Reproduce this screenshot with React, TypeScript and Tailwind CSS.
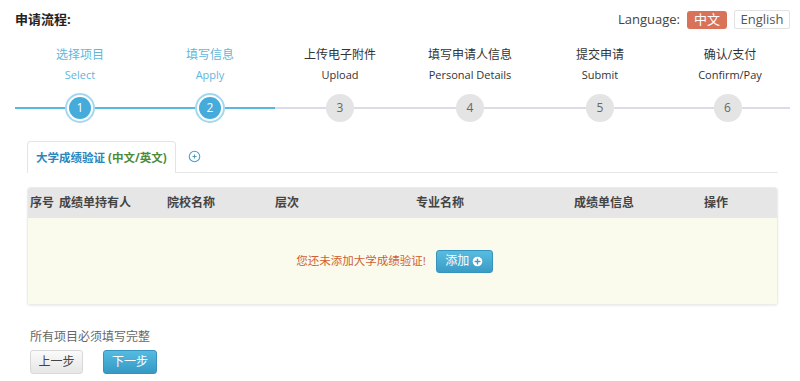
import React from 'react';

interface Step {
  cn: string;
  en: string;
  done: boolean;
}

const steps: Step[] = [
  { cn: '选择项目', en: 'Select', done: true },
  { cn: '填写信息', en: 'Apply', done: true },
  { cn: '上传电子附件', en: 'Upload', done: false },
  { cn: '填写申请人信息', en: 'Personal Details', done: false },
  { cn: '提交申请', en: 'Submit', done: false },
  { cn: '确认/支付', en: 'Confirm/Pay', done: false },
];

const columns = [
  { label: '序号', w: 'w-[29px]' },
  { label: '成绩单持有人', w: 'w-[108px]' },
  { label: '院校名称', w: 'w-[108px]' },
  { label: '层次', w: 'w-[141px]' },
  { label: '专业名称', w: 'w-[158px]' },
  { label: '成绩单信息', w: 'w-[130px]' },
  { label: '操作', w: 'flex-1' },
];

const PlusCircle: React.FC<{ className?: string }> = ({ className }) => (
  <svg viewBox="0 0 16 16" className={className}>
    <circle cx="8" cy="8" r="7" fill="white" />
    <path d="M8 4.5v7M4.5 8h7" stroke="#3a9fc9" strokeWidth="2" strokeLinecap="round" />
  </svg>
);

const App: React.FC = () => {
  const font = { fontFamily: '"Open Sans", "Noto Sans CJK SC", sans-serif' };
  return (
    <div className="w-[800px] h-[381px] bg-white overflow-hidden text-[#333]" style={font}>
      {/* header */}
      <div className="flex items-center justify-between pl-[15px] pr-[10px] pt-[10px] h-[29px]">
        <h1 className="text-[13px] font-bold text-[#222]">申请流程:</h1>
        <div className="flex items-center text-[13px]">
          <span className="text-[#444] mr-[7px]">Language:</span>
          <span className="h-[18px] w-[40px] rounded-[3px] bg-[#d8735a] text-white flex items-center justify-center">中文</span>
          <span className="ml-[7px] h-[19px] w-[56px] rounded-[2px] border border-[#e2e2e2] text-[#555] flex items-center justify-center">English</span>
        </div>
      </div>

      {/* steps */}
      <div className="grid grid-cols-[repeat(6,130px)] pl-[15px] mt-[18px]">
        {steps.map((s, i) => {
          const blue = 'bg-[#5ab8de]';
          const gray = 'bg-[#dcdbe8]';
          const leftBlue = i <= 1;
          const rightBlue = i <= 1;
          return (
            <div key={i} className="flex flex-col items-center">
              <div className={`text-[12px] leading-[16px] ${s.done ? 'text-[#62b6dc]' : 'text-[#333]'}`}>{s.cn}</div>
              <div className={`text-[11px] leading-[14px] mt-[5px] ${s.done ? 'text-[#62b6dc]' : 'text-[#333]'}`}>{s.en}</div>
              <div className="flex items-center w-full mt-[11px] h-[30px]">
                <div className={`h-[2px] flex-1 ${leftBlue ? blue : gray}`} />
                {s.done ? (
                  <div className="w-[30px] h-[30px] rounded-full bg-white border-2 border-[#a3d8ef] flex items-center justify-center">
                    <div className="w-[22px] h-[22px] rounded-full bg-[#44abdb] text-white text-[12px] flex items-center justify-center">{i + 1}</div>
                  </div>
                ) : (
                  <div className="w-[28px] h-[28px] rounded-full bg-[#e4e4e4] text-[#666] text-[12px] flex items-center justify-center">{i + 1}</div>
                )}
                <div className={`h-[2px] flex-1 ${rightBlue ? blue : gray} ${i === 5 ? 'mr-[5px]' : ''}`} />
              </div>
            </div>
          );
        })}
      </div>

      {/* tabs */}
      <div className="flex items-end ml-[27px] mr-[22px] mt-[17px] border-b border-[#e8e8e8]">
        <div className="h-[32px] px-[8px] border border-b-0 border-[#e4e4e4] rounded-t-[4px] bg-white flex items-center text-[11.5px] font-bold -mb-px">
          <span className="text-[#2a86bd]">大学成绩验证</span>
          <span className="text-[#4c8a3c] ml-[3px]">(中文/英文)</span>
        </div>
        <div className="h-[32px] flex items-center ml-[12px]">
          <svg viewBox="0 0 16 16" className="w-[13px] h-[13px]">
            <circle cx="8" cy="8" r="6.5" fill="none" stroke="#4a9ccd" strokeWidth="1.3" />
            <path d="M8 5.5v5M5.5 8h5" stroke="#4a9ccd" strokeWidth="1.4" />
          </svg>
        </div>
      </div>

      {/* table */}
      <div className="ml-[27px] mr-[22px] mt-[14px] rounded-[3px] border border-[#ececec] shadow-[0_1px_2px_rgba(0,0,0,0.08)] overflow-hidden">
        <div className="flex items-center h-[30px] bg-[#e6e6e6] pl-[2px] text-[12px] font-bold text-[#444]">
          {columns.map((c) => (
            <div key={c.label} className={c.w}>{c.label}</div>
          ))}
        </div>
        <div className="h-[86px] bg-[#fafbec] flex items-center justify-center pr-[16px]">
          <span className="text-[11.5px] text-[#cf5f35]">您还未添加大学成绩验证!</span>
          <button className="ml-[10px] h-[23px] w-[57px] justify-center rounded-[3px] bg-gradient-to-b from-[#58bce0] to-[#3a9cc6] border border-[#3593bd] text-white text-[12px] flex items-center gap-[3px]">
            添加
            <PlusCircle className="w-[11px] h-[11px]" />
          </button>
        </div>
      </div>

      {/* footer */}
      <div className="ml-[30px] mt-[23px] text-[12px] text-[#666]">所有项目必须填写完整</div>
      <div className="flex ml-[30px] mt-[4px] gap-[20px]">
        <button className="w-[53px] h-[24px] rounded-[3px] border border-[#d8d8d8] bg-gradient-to-b from-[#fafafa] to-[#e6e6e6] text-[12px] text-[#444]">上一步</button>
        <button className="w-[54px] h-[24px] rounded-[3px] border border-[#3593bd] bg-gradient-to-b from-[#55bbe0] to-[#3599c4] text-[12px] text-white">下一步</button>
      </div>
    </div>
  );
};

export default App;
